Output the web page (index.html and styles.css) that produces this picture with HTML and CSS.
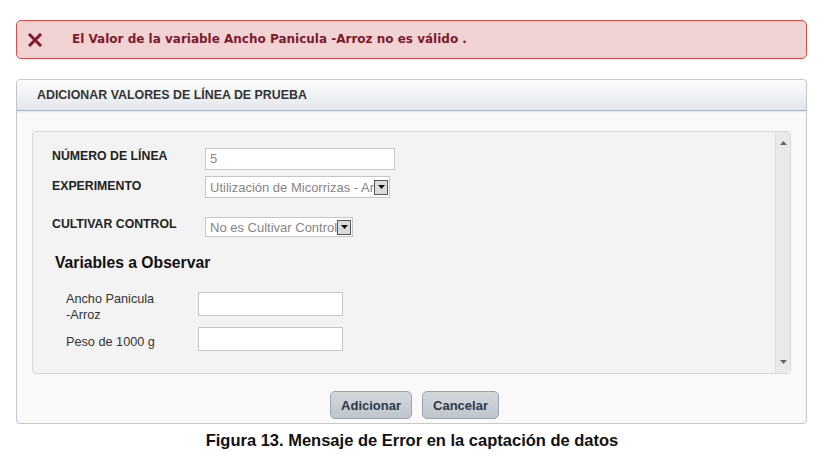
FILE: index.html
```html
<!DOCTYPE html>
<html lang="es">
<head>
<meta charset="utf-8">
<title>Adicionar valores de línea de prueba</title>
<link rel="stylesheet" href="styles.css">
</head>
<body>
<div class="alert">
  <svg class="alert-icon" width="14" height="14" viewBox="0 0 14 14"><path d="M2 2 L12 12 M12 2 L2 12" stroke="#7d1a2c" stroke-width="3" stroke-linecap="square"/></svg>
  <span class="alert-text">El Valor de la variable Ancho Panicula -Arroz no es válido .</span>
</div>

<div class="panel">
  <div class="panel-header">ADICIONAR VALORES DE LÍNEA DE PRUEBA</div>
  <div class="panel-body">
    <div class="inner">
      <div class="inner-content">
        <div class="row row-1">
          <div class="label">NÚMERO DE LÍNEA</div>
          <div class="field input-num">5</div>
        </div>
        <div class="row row-2">
          <div class="label">EXPERIMENTO</div>
          <div class="field select select-exp"><span class="select-text">Utilización de Micorrizas - Arroz</span><span class="select-btn"><svg width="7" height="4" viewBox="0 0 7 4"><path d="M0 0 H7 L3.5 4 Z" fill="#111"/></svg></span></div>
        </div>
        <div class="row row-3">
          <div class="label">CULTIVAR CONTROL</div>
          <div class="field select select-cult"><span class="select-text">No es Cultivar Control</span><span class="select-btn"><svg width="7" height="4" viewBox="0 0 7 4"><path d="M0 0 H7 L3.5 4 Z" fill="#111"/></svg></span></div>
        </div>
        <div class="section-title">Variables a Observar</div>
        <div class="var-row var-1">
          <div class="var-label">Ancho Panicula<br>-Arroz</div>
          <div class="field var-input"></div>
        </div>
        <div class="var-row var-2">
          <div class="var-label">Peso de 1000 g</div>
          <div class="field var-input"></div>
        </div>
      </div>
      <div class="scrollbar">
        <svg width="7" height="4" viewBox="0 0 7 4"><path d="M0 4 H7 L3.5 0 Z" fill="#666"/></svg>
        <svg width="7" height="4" viewBox="0 0 7 4"><path d="M0 0 H7 L3.5 4 Z" fill="#666"/></svg>
      </div>
    </div>
    <div class="actions">
      <button class="btn">Adicionar</button>
      <button class="btn">Cancelar</button>
    </div>
  </div>
</div>

<div class="caption">Figura 13. Mensaje de Error en la captación de datos</div>
</body>
</html>
```

FILE: styles.css
```css
html, body {
  margin: 0;
  padding: 0;
  background: #ffffff;
}
body {
  font-family: "Liberation Sans", Arial, sans-serif;
  color: #222;
  width: 826px;
  height: 462px;
  overflow: hidden;
}

.alert {
  margin: 20px 0 0 16px;
  width: 789px;
  height: 37px;
  background: #f2d3d3;
  border: 1px solid #dc4a4a;
  border-radius: 5px;
  display: flex;
  align-items: center;
}
.alert-icon {
  margin-left: 11px;
  flex: none;
}
.alert-text {
  margin-left: 30px;
  font-family: "DejaVu Sans", Verdana, sans-serif;
  font-weight: bold;
  font-size: 12px;
  color: #7d1a2c;
  padding-bottom: 1px;
}

.panel {
  margin: 20px 0 0 16px;
  width: 789px;
  height: 343px;
  border: 1px solid #c3c9d0;
  border-radius: 4px;
  background: #f9f9f9;
}
.panel-header {
  height: 30px;
  border-bottom: 1px solid #a9b2bd;
  background: linear-gradient(#fbfcfd 0%, #f1f3f6 45%, #e2e6eb 100%);
  border-radius: 4px 4px 0 0;
  font-weight: bold;
  font-size: 12.4px;
  color: #333;
  display: flex;
  align-items: center;
  padding-left: 20px;
  box-shadow: 0 1px 2px rgba(0,0,0,0.08);
}
.panel-body {
  padding: 20px 15px 0 15px;
}
.inner {
  height: 241px;
  border: 1px solid #d8d8d8;
  border-radius: 4px;
  background: #f3f3f3;
  display: flex;
}
.inner-content {
  flex: 1;
  padding: 16px 0 0 19px;
}
.scrollbar {
  width: 14px;
  background: #e9e9e9;
  border-left: 1px solid #dedede;
  display: flex;
  flex-direction: column;
  justify-content: space-between;
  align-items: center;
  padding: 9px 0;
}

.row {
  display: flex;
  align-items: flex-start;
}
.label {
  width: 153px;
  font-weight: bold;
  font-size: 12.3px;
  color: #222;
  flex: none;
}
.field {
  background: #ffffff;
  border: 1px solid #c6c6c6;
  box-sizing: border-box;
  font-size: 13px;
  color: #8a8a8a;
}
.row-1 .label { padding-top: 1px; }
.input-num {
  width: 190px;
  height: 22px;
  line-height: 20px;
  padding-left: 4px;
}
.row-2 { margin-top: 6px; }
.row-2 .label { padding-top: 3px; }
.select {
  display: flex;
  align-items: center;
  height: 22px;
  padding-left: 4px;
  overflow: hidden;
}
.select-text {
  flex: 1;
  white-space: nowrap;
  overflow: hidden;
  color: #858585;
}
.select-btn {
  flex: none;
  width: 14px;
  height: 15px;
  margin-right: 1px;
  background: #dcdcdc;
  border: 1px solid #555;
  box-sizing: border-box;
  display: flex;
  align-items: center;
  justify-content: center;
}
.select-exp { width: 185px; }
.row-3 { margin-top: 19px; }
.row-3 .label { margin-top: 0; }
.select-cult { width: 148px; height: 20px; }

.section-title {
  margin: 17px 0 0 3px;
  font-weight: bold;
  font-size: 15.7px;
  color: #111;
}

.var-row {
  display: flex;
  align-items: flex-start;
  height: 24px;
}
.var-1 { margin-top: 20px; }
.var-2 { margin-top: 11px; }
.var-label {
  width: 132px;
  padding-left: 14px;
  font-size: 12.7px;
  line-height: 16px;
  color: #333;
  flex: none;
}
.var-1 .var-label { margin-top: -1px; }
.var-2 .var-label { margin-top: 7px; }
.var-input {
  width: 145px;
  height: 24px;
}

.actions {
  display: flex;
  justify-content: center;
  gap: 10px;
  margin-top: 17px;
  padding-left: 6px;
}
.btn {
  height: 28px;
  padding: 0 10px;
  border: 1px solid #9ba4ad;
  border-radius: 5px;
  background: linear-gradient(#d3d8dd, #bec5cc);
  font-family: "Liberation Sans", Arial, sans-serif;
  font-weight: bold;
  font-size: 13px;
  color: #2c3a4a;
}

.caption {
  margin-top: 7px;
  text-align: center;
  font-weight: bold;
  font-size: 16.5px;
  color: #111;
  padding-right: 2px;
}
```
